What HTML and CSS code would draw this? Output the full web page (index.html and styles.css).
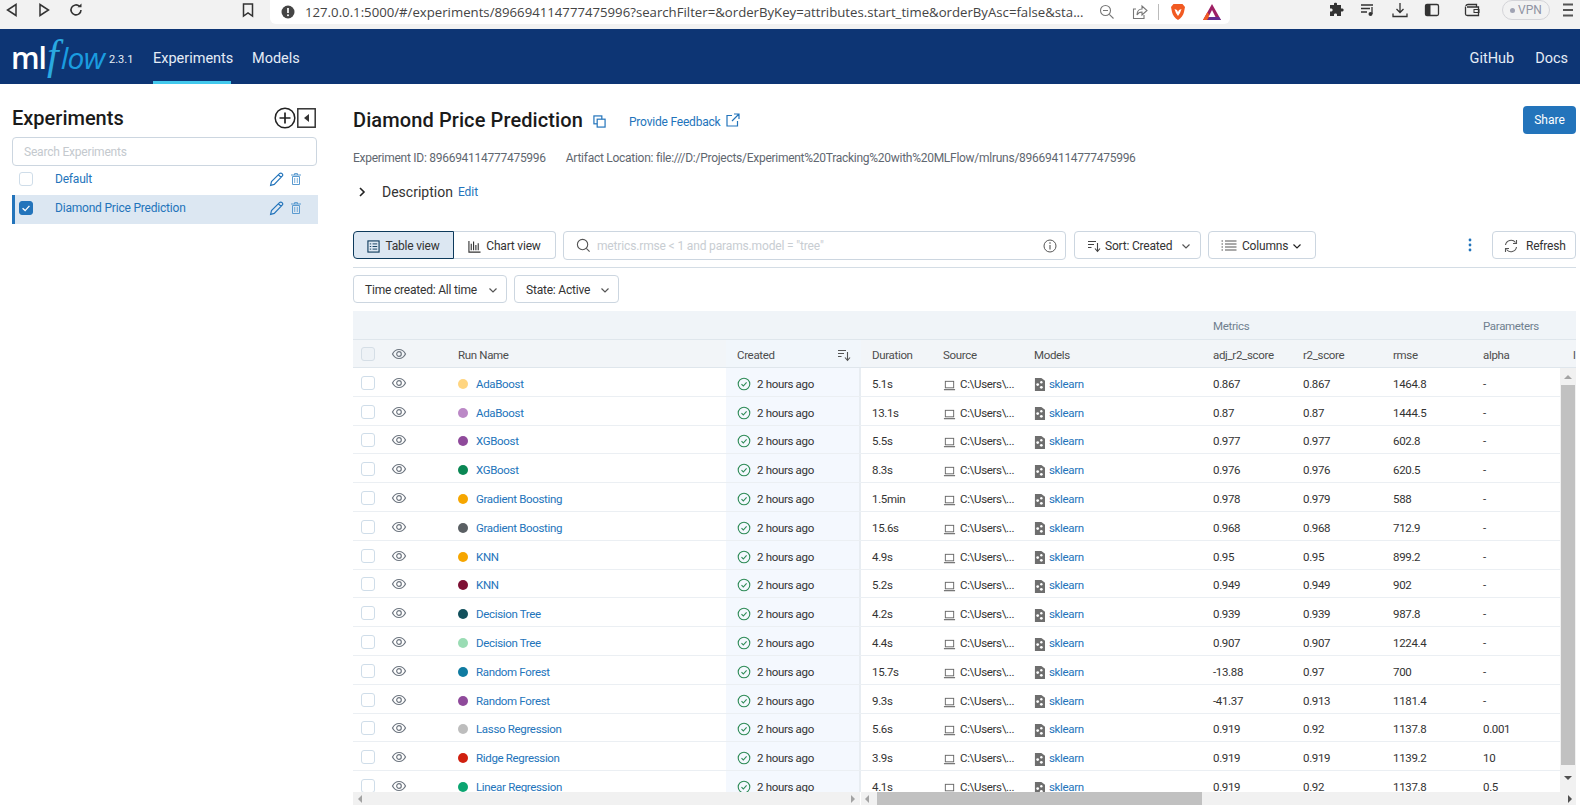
FILE: index.html
```html
<!DOCTYPE html>
<html lang="en">
<head>
	<meta charset="UTF-8">
	<title>MLflow</title>
	<link rel="stylesheet" href="styles.css">
</head>
<body>
	<svg class="defs" width="0" height="0">
		<symbol id="eye" viewBox="0 0 16 16"><path d="M1.5 8C3 5 5.3 3.5 8 3.5S13 5 14.5 8C13 11 10.700 12.500 8 12.500S3 11 1.500 8Z" fill="none" stroke="currentColor" stroke-width="1.200"/><circle cx="8" cy="8" r="2.300" fill="none" stroke="currentColor" stroke-width="1.200"/></symbol>
		<symbol id="ok" viewBox="0 0 14 14"><circle cx="7" cy="7" r="5.800" fill="none" stroke="#2e8b57" stroke-width="1.100"/><path d="M4.500 7.200L6.300 9L9.600 5.300" fill="none" stroke="#2e8b57" stroke-width="1.100"/></symbol>
		<symbol id="laptop" viewBox="0 0 14 14"><rect x="2.500" y="2.500" width="9" height="7" fill="none" stroke="#666" stroke-width="1"/><path d="M1 11.500H13" stroke="#666" stroke-width="1.200"/></symbol>
		<symbol id="model" viewBox="0 0 12 14"><path d="M1 0H8L12 3V14H1Z" fill="#6e6e6e"/><circle cx="4" cy="7" r="1.500" fill="#fff"/><circle cx="8" cy="4.500" r="1.300" fill="#fff"/><circle cx="8" cy="10" r="1.500" fill="#fff"/></symbol>
		<symbol id="pencil" viewBox="0 0 14 14"><path d="M1.500 12.500L2.300 9L9.800 1.500C10.500 .8 11.500 .8 12.200 1.500S13 3.200 12.300 3.900L4.900 11.600Z M8.800 2.600L11.300 5" fill="none" stroke="#2374bb" stroke-width="1.100"/></symbol>
		<symbol id="trash" viewBox="0 0 10 12"><path d="M0 2H10M3.500 2V.6H6.500V2" fill="none" stroke="#5b9bd0"/><path d="M1.500 3.500H8.500V11.500H1.500Z" fill="none" stroke="#5b9bd0"/><path d="M3.700 5V10M6.300 5V10" stroke="#5b9bd0" stroke-width=".8"/></symbol>
		<symbol id="sortdown" viewBox="0 0 14 14"><path d="M1 2.500H9M1 5.500H7M1 8.500H4.500" stroke="currentColor" stroke-width="1.100"/><path d="M10.500 4V12M8 9.500L10.500 12.500L13 9.500" fill="none" stroke="currentColor" stroke-width="1.100"/></symbol>
		<symbol id="chev" viewBox="0 0 10 10"><path d="M1.500 3.500L5 7L8.500 3.500" fill="none" stroke="currentColor" stroke-width="1.200"/></symbol>
	</svg>

	<div class="browser">
		<svg class="bicon nav-back" viewBox="0 0 16 16"><path d="M12 2.500V13.500L3.500 8Z" fill="none" stroke="#333" stroke-width="1.500"/></svg>
		<svg class="bicon nav-fwd" viewBox="0 0 16 16"><path d="M4 2.500V13.500L12.500 8Z" fill="none" stroke="#333" stroke-width="1.500"/></svg>
		<svg class="bicon nav-reload" viewBox="0 0 16 16"><path d="M13 8A5 5 0 1 1 11.500 4.300" fill="none" stroke="#333" stroke-width="1.600"/><path d="M9.500 5.300H13.500V1.500Z" fill="#333"/></svg>
		<svg class="bicon nav-mark" viewBox="0 0 16 16"><path d="M3.500 2H12.500V14L8 11L3.500 14Z" fill="none" stroke="#333" stroke-width="1.500"/></svg>
		<div class="urlbox">
			<svg class="warn" viewBox="0 0 14 14"><circle cx="7" cy="7" r="6.500" fill="#444"/><path d="M7 3V8" stroke="#fff" stroke-width="1.700"/><circle cx="7" cy="10.300" r="1" fill="#fff"/></svg>
			<span class="urltext">127.0.0.1:5000/#/experiments/896694114777475996?searchFilter=&amp;orderByKey=attributes.start_time&amp;orderByAsc=false&amp;sta...</span>
			<svg class="bicon zoomout" viewBox="0 0 16 16"><circle cx="6.500" cy="6.500" r="5" fill="none" stroke="#777" stroke-width="1.100"/><path d="M4 6.500H9M10.300 10.300L14.500 14.500" stroke="#777" stroke-width="1.100"/></svg>
			<svg class="bicon shareurl" viewBox="0 0 16 16"><path d="M4 5H1.500V14.500H12V11M5 11C5 7 7.500 5 10 5V2L15 6.500L10 11V8C7.500 8 6 9 5 11Z" fill="none" stroke="#777" stroke-width="1.100"/></svg>
			<span class="urlsep"></span>
			<svg class="brave" viewBox="0 0 16 18"><path d="M3.500 1H12.500L15 4L14 9C13.500 12 11 15.500 8 17C5 15.500 2.500 12 2 9L1 4Z" fill="#f15a22"/><path d="M4.500 6L7 7L8 9L9 7L11.500 6L10 10L8 13L6 10Z" fill="#fff"/></svg>
			<svg class="bat" viewBox="0 0 18 16"><path d="M9 0L18 16H0Z" fill="#9e1f63"/><path d="M0 16L4.500 8L9 16Z" fill="#f15a22"/><path d="M18 16H4L6 13H16Z" fill="#662d91"/><path d="M9 6L12.500 13H5.500Z" fill="#fff"/></svg>
		</div>
		<svg class="bicon puzzle" viewBox="0 0 16 16"><path d="M6 1.500C6 .5 9 .5 9 1.500V3H13V6.500H14.500C16 6.500 16 9.500 14.500 9.500H13V14H9V12.500C9 11 6 11 6 12.500V14H2V9.500H3.500C5 9.500 5 6.500 3.500 6.500H2V3H6Z" fill="#333"/></svg>
		<svg class="bicon media" viewBox="0 0 16 16"><path d="M1 3H13M1 6.500H10M1 10H7" stroke="#333" stroke-width="1.300"/><path d="M12 5V12" stroke="#333" stroke-width="1.300"/><circle cx="10.500" cy="12" r="2" fill="#333"/></svg>
		<svg class="bicon down" viewBox="0 0 16 16"><path d="M8 1V10M4.500 7L8 10.500L11.500 7M1 11.500V14.500H15V11.500" fill="none" stroke="#333" stroke-width="1.300"/></svg>
		<svg class="bicon side" viewBox="0 0 16 16"><rect x="1.500" y="2.500" width="13" height="11" rx="1.500" fill="none" stroke="#333" stroke-width="1.300"/><rect x="1.500" y="2.500" width="5" height="11" fill="#333"/></svg>
		<svg class="bicon wallet" viewBox="0 0 16 16"><path d="M2 4C2 3 3 2.500 4 2.500H12.500V5M1.500 4.500V12C1.500 13 2.500 13.500 3.500 13.500H14.500V5H3" fill="none" stroke="#333" stroke-width="1.300"/><rect x="10" y="7.500" width="5" height="3" fill="none" stroke="#333"/></svg>
		<div class="vpn"><span class="vpndot"></span>VPN</div>
		<svg class="bicon menu" viewBox="0 0 16 16"><path d="M3 2.500H13M3 8H13M3 13.500H13" stroke="#555" stroke-width="1.800"/></svg>
	</div>

	<div class="navbar">
		<div class="logo"><span class="logo-ml">ml</span><span class="logo-f">f</span><span class="logo-low">low</span></div>
		<span class="version">2.3.1</span>
		<a class="navlink active">Experiments</a>
		<a class="navlink">Models</a>
		<div class="grow"></div>
		<a class="navlink github">GitHub</a>
		<a class="navlink docs">Docs</a>
	</div>

	<div class="content">
		<div class="sidebar">
			<div class="side-head">
				<span class="side-title">Experiments</span>
				<svg class="side-add" viewBox="0 0 22 22"><circle cx="11" cy="11" r="9.800" fill="none" stroke="#222" stroke-width="1.500"/><path d="M11 5.500V16.500M5.500 11H16.500" stroke="#222" stroke-width="1.700"/></svg>
				<svg class="side-hide" viewBox="0 0 19 20"><rect x=".8" y=".8" width="17.400" height="18.400" fill="none" stroke="#333" stroke-width="1.500"/><path d="M12 6V14L7 10Z" fill="#333"/></svg>
			</div>
			<div class="side-search">Search Experiments</div>
			<div class="side-row">
				<span class="cb"></span>
				<span class="side-name">Default</span>
				<svg class="pencil"><use href="#pencil"/></svg>
				<svg class="trash"><use href="#trash"/></svg>
			</div>
			<div class="side-row selected">
				<span class="cb checked"><svg viewBox="0 0 14 14"><path d="M3 7.200L6 10L11 4.500" fill="none" stroke="#fff" stroke-width="1.500"/></svg></span>
				<span class="side-name">Diamond Price Prediction</span>
				<svg class="pencil"><use href="#pencil"/></svg>
				<svg class="trash"><use href="#trash"/></svg>
			</div>
		</div>

		<div class="main">
			<div class="title-row">
				<span class="title">Diamond Price Prediction</span>
				<svg class="copy" viewBox="0 0 14 14"><rect x="1" y="1" width="8.500" height="8.500" fill="none" stroke="#2374bb" stroke-width="1.300"/><rect x="4.500" y="4.500" width="8.500" height="8.500" fill="#fff" stroke="#2374bb" stroke-width="1.300"/></svg>
				<span class="feedback">Provide Feedback</span>
				<svg class="extlink" viewBox="0 0 14 14"><path d="M6 2.500H1V13H11.500V8M8 1H13V6M13 1L6 8" fill="none" stroke="#2374bb" stroke-width="1.200"/></svg>
				<div class="grow"></div>
				<button class="share">Share</button>
			</div>
			<div class="meta">
				<span>Experiment ID: 896694114777475996</span>
				<span>Artifact Location: file:///D:/Projects/Experiment%20Tracking%20with%20MLFlow/mlruns/896694114777475996</span>
			</div>
			<div class="desc">
				<svg class="desc-chev" viewBox="0 0 10 10"><path d="M3 1L7 5L3 9" fill="none" stroke="#222" stroke-width="1.600"/></svg>
				<span class="desc-label">Description</span>
				<span class="desc-edit">Edit</span>
			</div>

			<div class="toolbar">
				<div class="segment">
					<div class="seg on">
						<svg class="seg-icon" viewBox="0 0 14 14"><rect x="1" y="1" width="12" height="12" fill="none" stroke="#0d3a5c" stroke-width="1.200"/><path d="M3 4.200H4.500M6 4.200H11M3 7H4.500M6 7H11M3 9.800H4.500M6 9.800H11" stroke="#0d3a5c"/></svg>
						Table view
					</div>
					<div class="seg">
						<svg class="seg-icon" viewBox="0 0 14 14"><path d="M1 1V13H13.500M3.500 11V4M6 11V1.500M8.500 11V5.500M11 11V3.500" fill="none" stroke="#333" stroke-width="1.200"/></svg>
						Chart view
					</div>
				</div>
				<div class="searchbox">
					<svg class="search-icon" viewBox="0 0 16 16"><circle cx="7" cy="7" r="5.500" fill="none" stroke="#555" stroke-width="1.200"/><path d="M11 11L14.500 14.500" stroke="#555" stroke-width="1.200"/></svg>
					<span class="search-hint">metrics.rmse &lt; 1 and params.model = "tree"</span>
					<svg class="info-icon" viewBox="0 0 14 14"><circle cx="7" cy="7" r="6" fill="none" stroke="#555"/><path d="M7 6V10.500" stroke="#555" stroke-width="1.100"/><circle cx="7" cy="4" r=".8" fill="#555"/></svg>
				</div>
				<div class="btn sort">
					<svg class="btn-icon"><use href="#sortdown"/></svg>
					Sort: Created
					<svg class="chev"><use href="#chev"/></svg>
				</div>
				<div class="btn columns">
					<svg class="cols-icon" viewBox="0 0 16 14"><path d="M.5 2H2M4 2H15.500M.5 5H2M4 5H15.500M.5 8H2M4 8H15.500M.5 11H2M4 11H15.500" stroke="#555"/></svg>
					Columns
					<svg class="chev cols-chev"><use href="#chev"/></svg>
				</div>
				<div class="grow"></div>
				<svg class="kebab" viewBox="0 0 4 14"><circle cx="2" cy="2" r="1.400" fill="#2374bb"/><circle cx="2" cy="7" r="1.400" fill="#2374bb"/><circle cx="2" cy="12" r="1.400" fill="#2374bb"/></svg>
				<div class="btn refresh">
					<svg class="btn-icon refresh-icon" viewBox="0 0 14 14"><path d="M1.500 6A5.600 5.600 0 0 1 11.500 3.500M12.500 8A5.600 5.600 0 0 1 2.500 10.500" fill="none" stroke="#555" stroke-width="1.100"/><path d="M12.500 1V4.500H9M1.500 13V9.500H5" fill="none" stroke="#555" stroke-width="1.100"/></svg>
					Refresh
				</div>
			</div>

			<div class="filters">
				<div class="btn filter time">Time created: All time<svg class="chev"><use href="#chev"/></svg></div>
				<div class="btn filter state">State: Active<svg class="chev"><use href="#chev"/></svg></div>
			</div>

			<div class="table">
				<div class="cols groups">
					<span class="gl-metrics">Metrics</span>
					<span class="gl-params">Parameters</span>
				</div>
				<div class="cols head">
					<span class="c-check"><span class="cb head-cb"></span></span>
					<span class="c-eye"><svg class="eye"><use href="#eye"/></svg></span>
					<span class="c-name">Run Name</span>
					<span class="c-created">Created<svg class="sort-ico"><use href="#sortdown"/></svg></span>
					<span class="c-dur">Duration</span>
					<span class="c-src">Source</span>
					<span class="c-model">Models</span>
					<span>adj_r2_score</span>
					<span>r2_score</span>
					<span>rmse</span>
					<span>alpha</span>
					<span>l</span>
				</div>

				<div class="cols row">
					<span class="c-check"><span class="cb"></span></span>
					<span class="c-eye"><svg class="eye"><use href="#eye"/></svg></span>
					<span class="c-name"><i class="dot d1"></i><a>AdaBoost</a></span>
					<span class="c-created"><svg class="ok"><use href="#ok"/></svg>2 hours ago</span>
					<span class="c-dur">5.1s</span>
					<span class="c-src"><svg class="laptop"><use href="#laptop"/></svg>C:\Users\...</span>
					<span class="c-model"><svg class="model"><use href="#model"/></svg><a>sklearn</a></span>
					<span>0.867</span><span>0.867</span><span>1464.8</span><span>-</span>
				</div>
				<div class="cols row">
					<span class="c-check"><span class="cb"></span></span>
					<span class="c-eye"><svg class="eye"><use href="#eye"/></svg></span>
					<span class="c-name"><i class="dot d2"></i><a>AdaBoost</a></span>
					<span class="c-created"><svg class="ok"><use href="#ok"/></svg>2 hours ago</span>
					<span class="c-dur">13.1s</span>
					<span class="c-src"><svg class="laptop"><use href="#laptop"/></svg>C:\Users\...</span>
					<span class="c-model"><svg class="model"><use href="#model"/></svg><a>sklearn</a></span>
					<span>0.87</span><span>0.87</span><span>1444.5</span><span>-</span>
				</div>
				<div class="cols row">
					<span class="c-check"><span class="cb"></span></span>
					<span class="c-eye"><svg class="eye"><use href="#eye"/></svg></span>
					<span class="c-name"><i class="dot d3"></i><a>XGBoost</a></span>
					<span class="c-created"><svg class="ok"><use href="#ok"/></svg>2 hours ago</span>
					<span class="c-dur">5.5s</span>
					<span class="c-src"><svg class="laptop"><use href="#laptop"/></svg>C:\Users\...</span>
					<span class="c-model"><svg class="model"><use href="#model"/></svg><a>sklearn</a></span>
					<span>0.977</span><span>0.977</span><span>602.8</span><span>-</span>
				</div>
				<div class="cols row">
					<span class="c-check"><span class="cb"></span></span>
					<span class="c-eye"><svg class="eye"><use href="#eye"/></svg></span>
					<span class="c-name"><i class="dot d4"></i><a>XGBoost</a></span>
					<span class="c-created"><svg class="ok"><use href="#ok"/></svg>2 hours ago</span>
					<span class="c-dur">8.3s</span>
					<span class="c-src"><svg class="laptop"><use href="#laptop"/></svg>C:\Users\...</span>
					<span class="c-model"><svg class="model"><use href="#model"/></svg><a>sklearn</a></span>
					<span>0.976</span><span>0.976</span><span>620.5</span><span>-</span>
				</div>
				<div class="cols row">
					<span class="c-check"><span class="cb"></span></span>
					<span class="c-eye"><svg class="eye"><use href="#eye"/></svg></span>
					<span class="c-name"><i class="dot d5"></i><a>Gradient Boosting</a></span>
					<span class="c-created"><svg class="ok"><use href="#ok"/></svg>2 hours ago</span>
					<span class="c-dur">1.5min</span>
					<span class="c-src"><svg class="laptop"><use href="#laptop"/></svg>C:\Users\...</span>
					<span class="c-model"><svg class="model"><use href="#model"/></svg><a>sklearn</a></span>
					<span>0.978</span><span>0.979</span><span>588</span><span>-</span>
				</div>
				<div class="cols row">
					<span class="c-check"><span class="cb"></span></span>
					<span class="c-eye"><svg class="eye"><use href="#eye"/></svg></span>
					<span class="c-name"><i class="dot d6"></i><a>Gradient Boosting</a></span>
					<span class="c-created"><svg class="ok"><use href="#ok"/></svg>2 hours ago</span>
					<span class="c-dur">15.6s</span>
					<span class="c-src"><svg class="laptop"><use href="#laptop"/></svg>C:\Users\...</span>
					<span class="c-model"><svg class="model"><use href="#model"/></svg><a>sklearn</a></span>
					<span>0.968</span><span>0.968</span><span>712.9</span><span>-</span>
				</div>
				<div class="cols row">
					<span class="c-check"><span class="cb"></span></span>
					<span class="c-eye"><svg class="eye"><use href="#eye"/></svg></span>
					<span class="c-name"><i class="dot d5"></i><a>KNN</a></span>
					<span class="c-created"><svg class="ok"><use href="#ok"/></svg>2 hours ago</span>
					<span class="c-dur">4.9s</span>
					<span class="c-src"><svg class="laptop"><use href="#laptop"/></svg>C:\Users\...</span>
					<span class="c-model"><svg class="model"><use href="#model"/></svg><a>sklearn</a></span>
					<span>0.95</span><span>0.95</span><span>899.2</span><span>-</span>
				</div>
				<div class="cols row">
					<span class="c-check"><span class="cb"></span></span>
					<span class="c-eye"><svg class="eye"><use href="#eye"/></svg></span>
					<span class="c-name"><i class="dot d7"></i><a>KNN</a></span>
					<span class="c-created"><svg class="ok"><use href="#ok"/></svg>2 hours ago</span>
					<span class="c-dur">5.2s</span>
					<span class="c-src"><svg class="laptop"><use href="#laptop"/></svg>C:\Users\...</span>
					<span class="c-model"><svg class="model"><use href="#model"/></svg><a>sklearn</a></span>
					<span>0.949</span><span>0.949</span><span>902</span><span>-</span>
				</div>
				<div class="cols row">
					<span class="c-check"><span class="cb"></span></span>
					<span class="c-eye"><svg class="eye"><use href="#eye"/></svg></span>
					<span class="c-name"><i class="dot d8"></i><a>Decision Tree</a></span>
					<span class="c-created"><svg class="ok"><use href="#ok"/></svg>2 hours ago</span>
					<span class="c-dur">4.2s</span>
					<span class="c-src"><svg class="laptop"><use href="#laptop"/></svg>C:\Users\...</span>
					<span class="c-model"><svg class="model"><use href="#model"/></svg><a>sklearn</a></span>
					<span>0.939</span><span>0.939</span><span>987.8</span><span>-</span>
				</div>
				<div class="cols row">
					<span class="c-check"><span class="cb"></span></span>
					<span class="c-eye"><svg class="eye"><use href="#eye"/></svg></span>
					<span class="c-name"><i class="dot d9"></i><a>Decision Tree</a></span>
					<span class="c-created"><svg class="ok"><use href="#ok"/></svg>2 hours ago</span>
					<span class="c-dur">4.4s</span>
					<span class="c-src"><svg class="laptop"><use href="#laptop"/></svg>C:\Users\...</span>
					<span class="c-model"><svg class="model"><use href="#model"/></svg><a>sklearn</a></span>
					<span>0.907</span><span>0.907</span><span>1224.4</span><span>-</span>
				</div>
				<div class="cols row">
					<span class="c-check"><span class="cb"></span></span>
					<span class="c-eye"><svg class="eye"><use href="#eye"/></svg></span>
					<span class="c-name"><i class="dot d10"></i><a>Random Forest</a></span>
					<span class="c-created"><svg class="ok"><use href="#ok"/></svg>2 hours ago</span>
					<span class="c-dur">15.7s</span>
					<span class="c-src"><svg class="laptop"><use href="#laptop"/></svg>C:\Users\...</span>
					<span class="c-model"><svg class="model"><use href="#model"/></svg><a>sklearn</a></span>
					<span>-13.88</span><span>0.97</span><span>700</span><span>-</span>
				</div>
				<div class="cols row">
					<span class="c-check"><span class="cb"></span></span>
					<span class="c-eye"><svg class="eye"><use href="#eye"/></svg></span>
					<span class="c-name"><i class="dot d3"></i><a>Random Forest</a></span>
					<span class="c-created"><svg class="ok"><use href="#ok"/></svg>2 hours ago</span>
					<span class="c-dur">9.3s</span>
					<span class="c-src"><svg class="laptop"><use href="#laptop"/></svg>C:\Users\...</span>
					<span class="c-model"><svg class="model"><use href="#model"/></svg><a>sklearn</a></span>
					<span>-41.37</span><span>0.913</span><span>1181.4</span><span>-</span>
				</div>
				<div class="cols row">
					<span class="c-check"><span class="cb"></span></span>
					<span class="c-eye"><svg class="eye"><use href="#eye"/></svg></span>
					<span class="c-name"><i class="dot d11"></i><a>Lasso Regression</a></span>
					<span class="c-created"><svg class="ok"><use href="#ok"/></svg>2 hours ago</span>
					<span class="c-dur">5.6s</span>
					<span class="c-src"><svg class="laptop"><use href="#laptop"/></svg>C:\Users\...</span>
					<span class="c-model"><svg class="model"><use href="#model"/></svg><a>sklearn</a></span>
					<span>0.919</span><span>0.92</span><span>1137.8</span><span>0.001</span>
				</div>
				<div class="cols row">
					<span class="c-check"><span class="cb"></span></span>
					<span class="c-eye"><svg class="eye"><use href="#eye"/></svg></span>
					<span class="c-name"><i class="dot d12"></i><a>Ridge Regression</a></span>
					<span class="c-created"><svg class="ok"><use href="#ok"/></svg>2 hours ago</span>
					<span class="c-dur">3.9s</span>
					<span class="c-src"><svg class="laptop"><use href="#laptop"/></svg>C:\Users\...</span>
					<span class="c-model"><svg class="model"><use href="#model"/></svg><a>sklearn</a></span>
					<span>0.919</span><span>0.919</span><span>1139.2</span><span>10</span>
				</div>
				<div class="cols row">
					<span class="c-check"><span class="cb"></span></span>
					<span class="c-eye"><svg class="eye"><use href="#eye"/></svg></span>
					<span class="c-name"><i class="dot d13"></i><a>Linear Regression</a></span>
					<span class="c-created"><svg class="ok"><use href="#ok"/></svg>2 hours ago</span>
					<span class="c-dur">4.1s</span>
					<span class="c-src"><svg class="laptop"><use href="#laptop"/></svg>C:\Users\...</span>
					<span class="c-model"><svg class="model"><use href="#model"/></svg><a>sklearn</a></span>
					<span>0.919</span><span>0.92</span><span>1137.8</span><span>0.5</span>
				</div>

				<div class="vscroll">
					<i class="arrow up"></i>
					<div class="vthumb"></div>
					<i class="arrow down-a"></i>
				</div>
				<div class="hscroll">
					<div class="hleft"><i class="arrow left"></i><i class="arrow right"></i></div>
					<div class="hright"><i class="arrow left"></i><div class="hthumb"></div><i class="arrow right"></i></div>
				</div>
			</div>
		</div>
	</div>
</body>
</html>
```
FILE: styles.css
```css
*{
	box-sizing: border-box;
}
html, body{
	margin: 0;
	height: 805px;
	overflow: hidden;
	background: #fff;
	font-family: Roboto, sans-serif;
	font-size: 12px;
	color: #333;
}
.defs{
	display: block;
	height: 0;
}
.grow{
	flex-grow: 1;
}

/* browser chrome */
.browser{
	height: 29px;
	background: #f2f2f2;
	display: flex;
	align-items: flex-start;
}
.bicon{
	width: 16px;
	height: 16px;
	flex: none;
	margin-top: 2px;
}
.nav-back{ margin-left: 4px; }
.nav-fwd{ margin-left: 16px; }
.nav-reload{ margin-left: 16px; }
.nav-mark{ margin-left: 156px; }
.urlbox{
	width: 960px;
	height: 24px;
	margin-left: 14px;
	background: #fff;
	border-radius: 0 0 6px 6px;
	display: flex;
	align-items: center;
}
.urlbox .bicon{
	margin-top: 0;
}
.warn{
	width: 14px;
	height: 14px;
	margin-left: 11px;
	flex: none;
}
.urltext{
	margin-left: 10px;
	width: 782px;
	flex: none;
	font-family: "Open Sans", sans-serif;
	font-size: 13.200px;
	color: #444;
	white-space: nowrap;
}
.zoomout{ margin-left: 12px; }
.shareurl{ margin-left: 17px; }
.urlsep{
	width: 1px;
	height: 16px;
	background: #bbb;
	margin-left: 10px;
}
.brave{
	width: 16px;
	height: 18px;
	margin-left: 11px;
	flex: none;
}
.bat{
	width: 18px;
	height: 16px;
	margin-left: 17px;
	flex: none;
}
.puzzle{ margin-left: 98px; }
.media{ margin-left: 16px; }
.down{ margin-left: 16px; }
.side{ margin-left: 16px; }
.wallet{ margin-left: 24px; }
.vpn{
	width: 48px;
	height: 20px;
	margin-left: 22px;
	border: 1px solid #d4d4d8;
	border-radius: 10px;
	display: flex;
	align-items: center;
	justify-content: center;
	gap: 3px;
	font-size: 12px;
	color: #8f93a3;
}
.vpndot{
	width: 5px;
	height: 5px;
	border-radius: 50%;
	background: #a0a3b3;
}
.menu{ margin-left: 10px; }

/* mlflow header */
.navbar{
	height: 55px;
	background: #0d3574;
	display: flex;
	align-items: center;
	padding-left: 11px;
	padding-right: 12px;
}
.logo{
	display: flex;
	align-items: baseline;
	height: 44px;
	line-height: 40px;
	width: 98px;
	flex: none;
}
.logo-ml{
	font-family: "Open Sans", sans-serif;
	color: #fff;
	font-size: 30px;
	font-weight: 600;
	letter-spacing: -1px;
}
.logo-f{
	font-family: "Liberation Serif", serif;
	font-style: italic;
	font-size: 42px;
	color: #2aa9e0;
	margin-left: 1px;
}
.logo-low{
	font-family: "Open Sans", sans-serif;
	font-style: italic;
	font-size: 30px;
	color: #1a9ce0;
	margin-left: 2px;
	letter-spacing: -0.7px;
}
.version{
	color: #e6edf5;
	font-size: 11px;
	margin-top: 6px;
	width: 44px;
	flex: none;
}
.navlink{
	color: #e4ecf6;
	font-size: 14.500px;
	height: 55px;
	line-height: 59px;
	margin-right: 21px;
}
.navlink.active{
	width: 78px;
	text-align: center;
	border-bottom: 3px solid #43c9ed;
}
.navlink.docs{
	margin-right: 0;
}

/* body */
.content{
	display: flex;
	height: 721px;
}
.sidebar{
	width: 353px;
	flex: none;
	padding-left: 12px;
	padding-right: 35px;
	padding-top: 23px;
}
.side-head{
	display: flex;
	align-items: center;
	height: 22px;
	margin-bottom: 8px;
}
.side-title{
	font-size: 20px;
	font-weight: 500;
	color: #1a1a1a;
	flex-grow: 1;
}
.side-add{
	width: 22px;
	height: 22px;
}
.side-hide{
	width: 19px;
	height: 20px;
	margin-left: 1px;
	margin-right: 2px;
}
.side-search{
	height: 29px;
	border: 1px solid #ccd6e0;
	border-radius: 4px;
	margin-right: 1px;
	padding-left: 11px;
	line-height: 29px;
	color: #c4c9ce;
	letter-spacing: -0.2px;
}
.side-row{
	height: 29px;
	display: flex;
	align-items: center;
	padding-left: 7px;
	padding-bottom: 3px;
	color: #2374bb;
}
.side-row.selected{
	background: #dce7f2;
	border-left: 3px solid #2374bb;
	padding-left: 4px;
}
.cb{
	width: 14px;
	height: 14px;
	border: 1px solid #cfdde9;
	border-radius: 3px;
	background: #fff;
	display: block;
	flex: none;
}
.cb.checked{
	background: #2374bb;
	border-color: #2374bb;
}
.cb.checked svg{
	display: block;
	width: 12px;
	height: 12px;
}
.side-name{
	margin-left: 22px;
	flex-grow: 1;
	letter-spacing: -0.2px;
}
.pencil{
	width: 15px;
	height: 15px;
	margin-right: 7px;
}
.trash{
	width: 10px;
	height: 12px;
	margin-right: 17px;
}

/* main column */
.main{
	flex-grow: 1;
	min-width: 0;
	padding-right: 4px;
	padding-top: 22px;
}
.title-row{
	display: flex;
	align-items: center;
	height: 28px;
}
.title{
	font-size: 20px;
	font-weight: 500;
	letter-spacing: 0.1px;
	color: #1a1a1a;
}
.copy{
	width: 13px;
	height: 13px;
	margin-left: 10px;
	margin-top: 3px;
}
.feedback{
	color: #2374bb;
	margin-left: 23px;
	margin-top: 3px;
	letter-spacing: -0.2px;
}
.extlink{
	width: 14px;
	height: 14px;
	margin-left: 5px;
}
.share{
	width: 53px;
	height: 28px;
	background: #2374bb;
	color: #fff;
	border: 0;
	border-radius: 4px;
	font-family: Roboto, sans-serif;
	font-size: 12px;
	padding: 0;
}
.meta{
	display: flex;
	gap: 20px;
	margin-top: 15px;
	height: 18px;
	line-height: 18px;
	color: #5f6770;
	letter-spacing: -0.27px;
	white-space: nowrap;
}
.desc{
	display: flex;
	align-items: center;
	margin-top: 15px;
	height: 20px;
}
.desc-chev{
	width: 10px;
	height: 10px;
	margin-left: 4px;
}
.desc-label{
	font-size: 14px;
	margin-left: 15px;
	color: #333;
}
.desc-edit{
	color: #2374bb;
	margin-left: 5px;
}
.toolbar{
	display: flex;
	align-items: center;
	height: 37px;
	margin-top: 29px;
	padding-bottom: 8px;
	border-bottom: 1px solid #d4dde5;
}
.segment{
	display: flex;
	height: 28px;
}
.seg{
	height: 28px;
	width: 102px;
	padding-top: 2px;
	border: 1px solid #ccd6e0;
	border-left: 0;
	border-radius: 0 4px 4px 0;
	display: flex;
	align-items: center;
	justify-content: center;
	gap: 5px;
	letter-spacing: -0.2px;
}
.seg.on{
	width: 101px;
	background: #dce7f2;
	border: 1px solid #0d3a5c;
	border-radius: 4px 0 0 4px;
}
.seg-icon{
	width: 13px;
	height: 13px;
}
.searchbox{
	width: 503px;
	height: 29px;
	margin-left: 7px;
	padding-top: 1px;
	border: 1px solid #ccd6e0;
	border-radius: 4px;
	display: flex;
	align-items: center;
	padding-left: 12px;
	padding-right: 8px;
}
.search-icon{
	width: 15px;
	height: 15px;
}
.search-hint{
	flex-grow: 1;
	margin-left: 6px;
	color: #c8cdd2;
	letter-spacing: -0.15px;
}
.info-icon{
	width: 14px;
	height: 14px;
}
.btn{
	height: 28px;
	padding-top: 2px;
	border: 1px solid #ccd6e0;
	border-radius: 4px;
	display: flex;
	align-items: center;
	letter-spacing: -0.2px;
	flex: none;
}
.btn-icon{
	width: 14px;
	height: 14px;
	color: #444;
	margin-right: 4px;
}
.chev{
	width: 10px;
	height: 10px;
	color: #555;
	margin-left: auto;
}
.sort{
	width: 127px;
	margin-left: 8px;
	padding-left: 12px;
	padding-right: 9px;
}
.columns{
	width: 108px;
	margin-left: 7px;
	padding-left: 12px;
	padding-right: 13px;
}
.cols-icon{
	width: 16px;
	height: 14px;
	margin-right: 5px;
}
.cols-chev{
	color: #222;
}
.kebab{
	width: 4px;
	height: 14px;
	margin-right: 20px;
}
.refresh{
	width: 84px;
	padding-left: 11px;
}
.refresh-icon{
	margin-right: 8px;
}
.filters{
	display: flex;
	gap: 7px;
	margin-top: 7px;
}
.filter{
	padding-left: 11px;
	padding-right: 8px;
}
.time{
	width: 154px;
}
.state{
	width: 105px;
}

/* runs table */
.table{
	position: relative;
	margin-top: 8px;
	height: 494px;
	overflow: hidden;
}
.cols{
	display: grid;
	grid-template-columns: 34px 60px 279px 135px 72px 91px 179px 90px 90px 90px 90px 90px;
	align-items: center;
	white-space: nowrap;
	font-size: 11.500px;
}
.cols > span{
	padding-top: 2px;
	padding-left: 10px;
	min-width: 0;
	display: flex;
	align-items: center;
	height: 100%;
	letter-spacing: -0.33px;
}
.head > .c-check, .head > .c-eye{
	padding-top: 0;
}
.row > span{
	padding-top: 4px;
}
.row > .c-check, .row > .c-eye{
	padding-top: 2px;
}
.groups{
	height: 29px;
	background: #f0f4f8;
	border-bottom: 1px solid #dfe6ec;
	color: #6f7f8f;
}
.gl-metrics{
	grid-column: 8;
}
.gl-params{
	grid-column: 11;
	grid-row: 1;
}
.head{
	height: 28px;
	background: #f2f5f8;
	border-bottom: 1px solid #dfe6ec;
	color: #4d4d4d;
}
.row{
	height: 28.800px;
	border-bottom: 1px solid #ebeff3;
}
.cols > .c-check{
	padding-left: 8px;
}
.head-cb{
	background: #eef2f6;
	border-color: #d5dee6;
}
.cols > .c-eye{
	padding-left: 4px;
}
.eye{
	width: 16px;
	height: 16px;
	color: #6e7680;
}
.cols > .c-name{
	padding-left: 11px;
}
.dot{
	width: 10px;
	height: 10px;
	border-radius: 50%;
	margin-right: 8px;
	flex: none;
}
.d1{ background: #ffd580; }
.d2{ background: #bb88c6; }
.d3{ background: #8f4a9b; }
.d4{ background: #0a8754; }
.d5{ background: #f6a600; }
.d6{ background: #5a5f63; }
.d7{ background: #7d0f33; }
.d8{ background: #12505c; }
.d9{ background: #9adcb4; }
.d10{ background: #0f7ba1; }
.d11{ background: #bdbdbd; }
.d12{ background: #d0200f; }
.d13{ background: #0ba571; }
a{
	color: #2374bb;
}
.cols > .c-created{
	padding-left: 11px;
	background: #f4f8fe;
	border-right: 2px solid #e8edf2;
}
.head > .c-created{
	background: #f1f6fb;
	border-right: 0;
}
.sort-ico{
	width: 14px;
	height: 14px;
	color: #555;
	margin-left: auto;
	margin-right: 10px;
}
.ok{
	width: 14px;
	height: 14px;
	margin-right: 6px;
}
.cols > .c-dur{
	padding-left: 11px;
}
.laptop{
	width: 13px;
	height: 13px;
	margin-right: 4px;
	margin-top: 3px;
}
.model{
	width: 11px;
	height: 13px;
	margin-right: 4px;
	margin-top: 2px;
}

/* scrollbars sit over the grid */
.vscroll{
	position: absolute;
	top: 57px;
	right: 0;
	bottom: 13px;
	width: 16px;
	background: #f1f1f1;
	display: flex;
	flex-direction: column;
	align-items: center;
}
.vthumb{
	width: 14px;
	height: 380px;
	background: #c1c1c1;
	margin-top: 6px;
	margin-bottom: 11px;
}
.arrow{
	width: 0;
	height: 0;
	flex: none;
	border: 4px solid transparent;
}
.arrow.up{
	border-bottom-color: #a3a3a3;
	border-top-width: 0;
	margin-top: 7px;
}
.arrow.down-a{
	border-top-color: #505050;
	border-bottom-width: 0;
}
.hscroll{
	position: absolute;
	left: 0;
	right: 0;
	bottom: 0;
	height: 13px;
	background: #f1f1f1;
	display: flex;
}
.hleft{
	width: 508px;
	display: flex;
	justify-content: space-between;
	align-items: center;
	padding-left: 5px;
	padding-right: 5px;
	border-right: 1px solid #fff;
	flex: none;
}
.hright{
	flex-grow: 1;
	display: flex;
	align-items: center;
	padding-left: 4px;
	padding-right: 4px;
}
.arrow.left{
	border-right-color: #a3a3a3;
	border-left-width: 0;
}
.arrow.right{
	border-left-color: #a3a3a3;
	border-right-width: 0;
}
.hright .arrow.right{
	border-left-color: #505050;
}
.hthumb{
	width: 325px;
	height: 13px;
	background: #c1c1c1;
	margin-left: 8px;
	margin-right: auto;
}
```
